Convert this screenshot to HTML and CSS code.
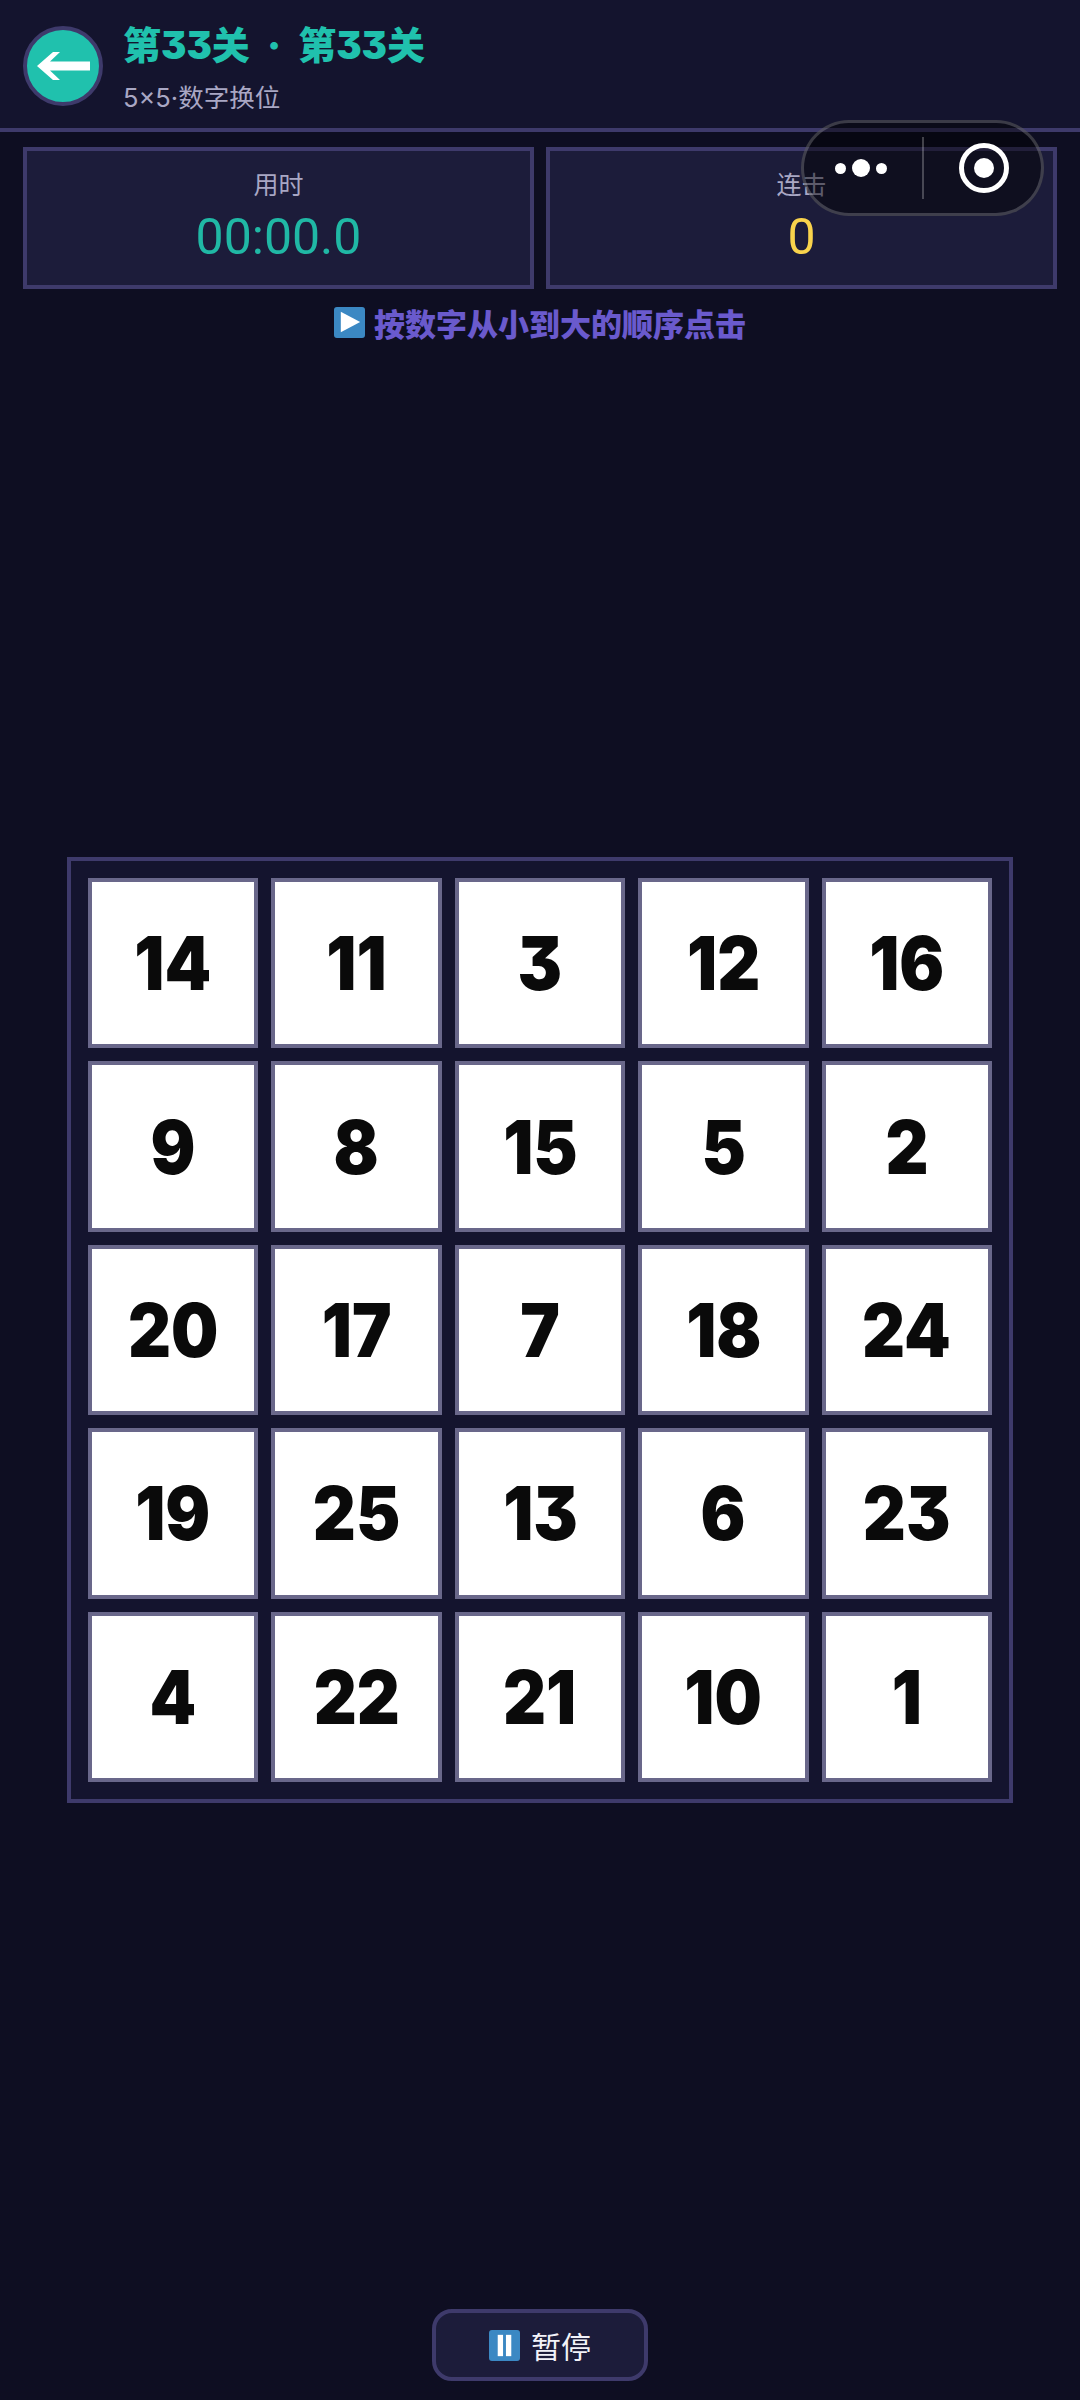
FILE: index.html
```html
<!DOCTYPE html>
<html lang="zh">
<head>
<meta charset="utf-8">
<title>第33关</title>
<link rel="stylesheet" href="styles.css">
</head>
<body>
<div class="page">
  <header class="topbar">
    <button class="back" aria-label="返回">
      <svg width="53" height="28" viewBox="0 0 53 28"><path d="M0 14 L16 0 H23 L13 9.5 H53 V18.5 H13 L23 28 H16 Z" fill="#fff"/></svg>
    </button>
    <div class="heading">
      <div class="title">第33关 · 第33关</div>
      <div class="subtitle">5×5·数字换位</div>
    </div>
  </header>
  <section class="stats">
    <div class="stat"><div class="stat-label">用时</div><div class="stat-value teal">00:00.0</div></div>
    <div class="stat"><div class="stat-label">连击</div><div class="stat-value gold">0</div></div>
  </section>
  <div class="hint">
    <svg class="emoji" viewBox="0 0 32 32"><rect width="32" height="32" rx="3" fill="#3b88c3"/><path d="M7 5 L27 15.5 L7 26 Z" fill="#fff"/></svg>
    <span>按数字从小到大的顺序点击</span>
  </div>
  <main class="stage">
    <div class="board">
      <div class="tile"><span>14</span></div><div class="tile"><span>11</span></div><div class="tile"><span>3</span></div><div class="tile"><span>12</span></div><div class="tile"><span>16</span></div>
      <div class="tile"><span>9</span></div><div class="tile"><span>8</span></div><div class="tile"><span>15</span></div><div class="tile"><span>5</span></div><div class="tile"><span>2</span></div>
      <div class="tile"><span>20</span></div><div class="tile"><span>17</span></div><div class="tile"><span>7</span></div><div class="tile"><span>18</span></div><div class="tile"><span>24</span></div>
      <div class="tile"><span>19</span></div><div class="tile"><span>25</span></div><div class="tile"><span>13</span></div><div class="tile"><span>6</span></div><div class="tile"><span>23</span></div>
      <div class="tile"><span>4</span></div><div class="tile"><span>22</span></div><div class="tile"><span>21</span></div><div class="tile"><span>10</span></div><div class="tile"><span>1</span></div>
    </div>
  </main>
  <footer class="footer">
    <button class="pause">
      <svg class="emoji" viewBox="0 0 32 32"><rect width="32" height="32" rx="3" fill="#3b88c3"/><rect x="9" y="5" width="5.5" height="22" fill="#fff"/><rect x="17.5" y="5" width="5.5" height="22" fill="#fff"/></svg>
      <span>暂停</span>
    </button>
  </footer>
  <div class="capsule">
    <div class="capsule-side left">
      <i class="dot"></i><i class="dot big"></i><i class="dot"></i>
    </div>
    <div class="capsule-rule"></div>
    <div class="capsule-side right">
      <svg width="50" height="50" viewBox="0 0 50 50"><circle cx="25" cy="25" r="22.5" fill="none" stroke="#fff" stroke-width="5"/><circle cx="25" cy="25" r="10" fill="#fff"/></svg>
    </div>
  </div>
</div>
</body>
</html>
```
FILE: styles.css
```css
* { box-sizing: border-box; }
html, body { margin: 0; padding: 0; }
body {
  background: #0e0e22;
  font-family: "Inter", "Noto Sans CJK SC", sans-serif;
}
.page {
  position: relative;
  width: 1080px;
  height: 2400px;
  display: flex;
  flex-direction: column;
  overflow: hidden;
}
.topbar {
  height: 132px;
  background: #14142e;
  border-bottom: 4px solid #3e3a6b;
  display: flex;
  align-items: flex-start;
  padding: 26px 0 0 23px;
  gap: 20px;
}
.back {
  width: 80px;
  height: 80px;
  flex: none;
  border-radius: 50%;
  background: #20c1ad;
  border: 4px solid #3e3a6b;
  padding: 0;
  display: flex;
  align-items: center;
  justify-content: center;
}
.heading { margin-top: -8px; }
.title {
  font-size: 38px;
  line-height: 54px;
  font-weight: 900;
  color: #20c1ad;
  white-space: pre;
  word-spacing: 9.5px;
  font-feature-settings: "cv09";
}
.subtitle {
  font-size: 25.5px;
  line-height: 36px;
  margin-top: 8px;
  color: #a9a7c4;
}
.stats {
  display: flex;
  gap: 12px;
  padding: 15px 23px 0;
}
.stat {
  flex: 1;
  height: 142px;
  background: #1c1c3a;
  border: 4px solid #3e3a6b;
  text-align: center;
  padding-top: 16px;
}
.stat-label {
  font-size: 25px;
  line-height: 36px;
  color: #a9a7c4;
}
.stat-value {
  font-family: "Roboto", sans-serif;
  font-size: 50px;
  line-height: 58px;
  margin-top: 5px;
}
.teal { color: #20b8a5; }
.gold { color: #f9d34c; }
.hint {
  display: flex;
  align-items: center;
  justify-content: center;
  gap: 9px;
  height: 44px;
  margin-top: 11px;
  font-size: 31px;
  font-weight: 800;
  color: #6a5acd;
}
.emoji { width: 31px; height: 31px; flex: none; }
.stage {
  flex: 1;
  display: flex;
  justify-content: center;
  align-items: flex-start;
  padding-top: 513px;
}
.board {
  width: 946px;
  height: 946px;
  background: #14142e;
  border: 4px solid #3e3a6b;
  padding: 17px;
  display: grid;
  grid-template-columns: repeat(5, 1fr);
  grid-template-rows: repeat(5, 1fr);
  gap: 13px;
}
.tile {
  background: #fff;
  border: 4px solid #69678a;
  display: flex;
  align-items: center;
  justify-content: center;
  font-size: 74px;
  font-weight: 900;
  font-feature-settings: "cv09";
  color: #0a0a0a;
}
.tile span { display: block; transform: scaleX(0.9); }
.footer {
  display: flex;
  justify-content: center;
  padding-bottom: 19px;
}
.pause {
  width: 216px;
  height: 72px;
  background: #1c1c3a;
  border: 4px solid #3e3a6b;
  border-radius: 20px;
  display: flex;
  align-items: center;
  justify-content: center;
  gap: 11px;
  color: #f2f2f8;
  font-family: inherit;
  font-size: 30px;
  padding: 0;
}
.capsule {
  position: absolute;
  left: 801px;
  top: 120px;
  width: 243px;
  height: 96px;
  border: 3px solid rgba(255, 255, 255, 0.2);
  border-radius: 48px;
  background: rgba(0, 0, 0, 0.45);
  display: flex;
  align-items: center;
}
.capsule-side {
  flex: 1;
  display: flex;
  align-items: center;
  justify-content: center;
  gap: 6px;
}
.capsule-side.left { padding-right: 4px; }
.capsule-side.right { padding-left: 4px; }
.capsule-rule {
  width: 2px;
  height: 62px;
  background: rgba(255, 255, 255, 0.24);
}
.dot {
  width: 11px;
  height: 11px;
  border-radius: 50%;
  background: #fff;
}
.dot.big { width: 18px; height: 18px; }
```
